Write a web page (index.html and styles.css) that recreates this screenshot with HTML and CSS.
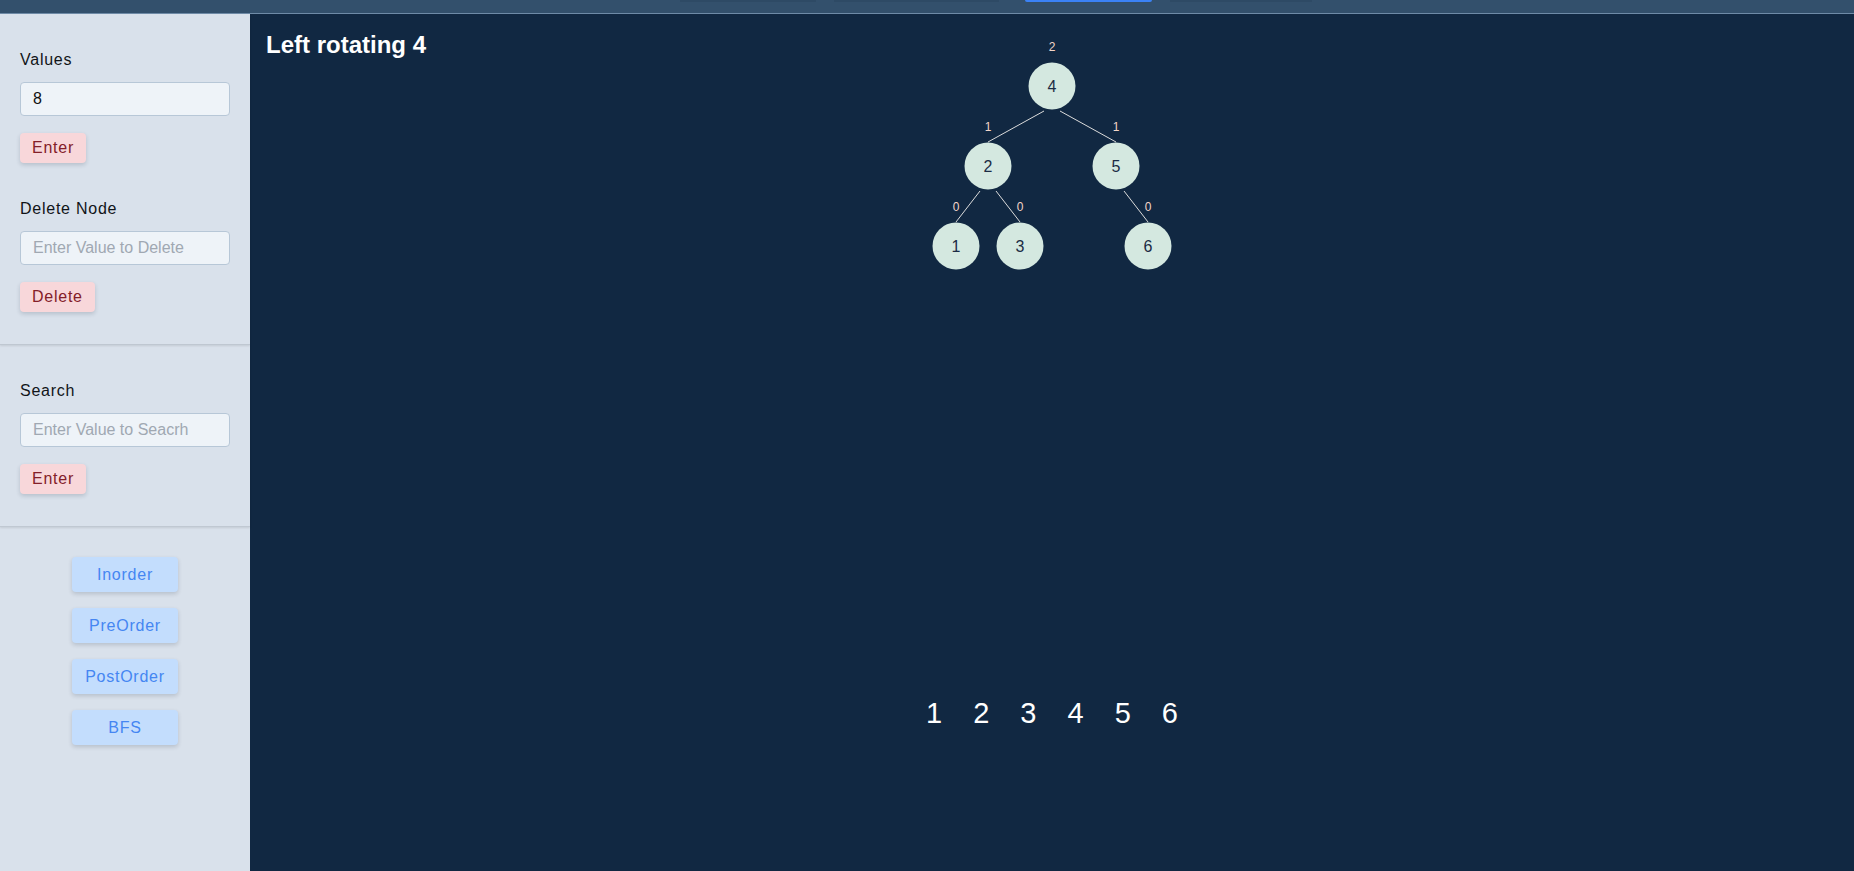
FILE: index.html
```html
<!DOCTYPE html>
<html lang="en">
<head>
<meta charset="utf-8">
<title>AVL Tree Visualizer</title>
<link rel="stylesheet" href="styles.css">
</head>
<body>
<nav class="topbar">
  <div class="tabs">
    <span class="tab tab-a"></span>
    <span class="tab tab-b"></span>
    <span class="tab tab-active"></span>
    <span class="tab tab-d"></span>
  </div>
</nav>
<div class="layout">
  <aside class="sidebar">
    <section class="panel">
      <div class="group">
        <label class="label" for="values">Values</label>
        <input id="values" class="field" type="text" value="8">
        <button class="btn btn-danger">Enter</button>
      </div>
      <div class="group">
        <label class="label" for="del">Delete Node</label>
        <input id="del" class="field" type="text" placeholder="Enter Value to Delete">
        <button class="btn btn-danger">Delete</button>
      </div>
    </section>
    <section class="panel">
      <div class="group">
        <label class="label" for="search">Search</label>
        <input id="search" class="field" type="text" placeholder="Enter Value to Seacrh">
        <button class="btn btn-danger">Enter</button>
      </div>
    </section>
    <section class="panel panel-traversals">
      <button class="btn btn-primary">Inorder</button>
      <button class="btn btn-primary">PreOrder</button>
      <button class="btn btn-primary">PostOrder</button>
      <button class="btn btn-primary">BFS</button>
    </section>
  </aside>
  <main class="main">
    <div class="stage">
      <h2 class="title">Left rotating 4</h2>
      <svg class="tree" width="400" height="260" viewBox="0 0 400 260">
        <g class="edges">
          <line x1="192" y1="97" x2="136" y2="128"/>
          <line x1="208" y1="97" x2="264" y2="128"/>
          <line x1="128" y1="177" x2="104" y2="208"/>
          <line x1="144" y1="177" x2="168" y2="208"/>
          <line x1="272" y1="177" x2="296" y2="208"/>
        </g>
        <g class="heights">
          <text x="200" y="33">2</text>
          <text x="136" y="113">1</text>
          <text x="264" y="113">1</text>
          <text x="104" y="193">0</text>
          <text x="168" y="193">0</text>
          <text x="296" y="193">0</text>
        </g>
        <g class="nodes">
          <circle cx="200" cy="72" r="23.5"/>
          <circle cx="136" cy="152" r="23.5"/>
          <circle cx="264" cy="152" r="23.5"/>
          <circle cx="104" cy="232" r="23.5"/>
          <circle cx="168" cy="232" r="23.5"/>
          <circle cx="296" cy="232" r="23.5"/>
        </g>
        <g class="values">
          <text x="200" y="72">4</text>
          <text x="136" y="152">2</text>
          <text x="264" y="152">5</text>
          <text x="104" y="232">1</text>
          <text x="168" y="232">3</text>
          <text x="296" y="232">6</text>
        </g>
      </svg>
    </div>
    <div class="traversal">
      <span>1</span><span>2</span><span>3</span><span>4</span><span>5</span><span>6</span>
    </div>
  </main>
</div>
</body>
</html>
```

FILE: styles.css
```css
* {
  box-sizing: border-box;
}

html, body {
  margin: 0;
  padding: 0;
  height: 100%;
}

body {
  font-family: "Liberation Sans", Arial, sans-serif;
  background: #112842;
  display: flex;
  flex-direction: column;
  overflow: hidden;
}

.topbar {
  height: 14px;
  flex: 0 0 14px;
  background: #33506c;
  border-bottom: 1px solid #6f8ba7;
}

.tabs {
  display: flex;
  margin-left: 680px;
  gap: 18px;
}

.tab {
  display: block;
  height: 2px;
  background: rgba(20, 35, 55, 0.12);
}

.tab-a { width: 136px; }
.tab-b { width: 165px; margin-right: 8px; }
.tab-active { width: 127px; background: #3b82f6; border-radius: 0 0 2px 2px; }
.tab-d { width: 142px; }

.layout {
  flex: 1;
  display: flex;
  min-height: 0;
}

.sidebar {
  width: 250px;
  flex: 0 0 250px;
  background: #d9e1eb;
  display: flex;
  flex-direction: column;
}

.panel {
  padding: 34px 20px 32px;
  border-bottom: 1px solid #c0c8d2;
  box-shadow: 0 1px 2px rgba(0, 0, 0, 0.1);
  display: flex;
  flex-direction: column;
  gap: 34px;
}

.group {
  display: flex;
  flex-direction: column;
  align-items: flex-start;
}

.label {
  font-size: 16px;
  line-height: 20px;
  letter-spacing: 0.75px;
  color: #111418;
  margin-top: 2px;
  margin-bottom: 12px;
}

.field {
  width: 100%;
  height: 34px;
  padding: 6px 12px;
  font-family: "Liberation Sans", Arial, sans-serif;
  font-size: 16px;
  line-height: 20px;
  color: #111;
  background: #eef3f8;
  border: 1px solid #b7c7d7;
  border-radius: 4px;
  outline: none;
}

.field::placeholder {
  color: #a0a8b2;
}

.btn {
  font-family: "Liberation Sans", Arial, sans-serif;
  font-size: 16px;
  line-height: 20px;
  letter-spacing: 0.75px;
  border: none;
  border-radius: 4px;
  box-shadow: 0 2px 4px rgba(30, 40, 60, 0.18);
  cursor: pointer;
}

.btn-danger {
  margin-top: 17px;
  padding: 5px 12px;
  background: #f8d7da;
  color: #842029;
}

.panel-traversals {
  padding-top: 30px;
  border-bottom: none;
  box-shadow: none;
  align-items: center;
  gap: 16px;
}

.btn-primary {
  width: 106px;
  height: 35px;
  padding: 0;
  background: #c3ddfd;
  color: #4586f2;
}

.main {
  flex: 1;
  min-width: 0;
  display: flex;
  flex-direction: column;
}

.stage {
  display: grid;
}

.title {
  grid-area: 1 / 1;
  justify-self: start;
  align-self: start;
  margin: 17px 0 0 16px;
  font-size: 24px;
  font-weight: 700;
  color: #ffffff;
  position: relative;
  z-index: 1;
}

.tree {
  grid-area: 1 / 1;
  justify-self: center;
  display: block;
}

.edges line {
  stroke: #dcdcdc;
  stroke-width: 1;
}

.nodes circle {
  fill: #d4e8e0;
}

.heights text {
  font-family: "Liberation Sans", Arial, sans-serif;
  font-size: 12px;
  fill: #f3d6c8;
  text-anchor: middle;
  dominant-baseline: central;
}

.values text {
  font-family: "Liberation Sans", Arial, sans-serif;
  font-size: 16px;
  fill: #1b2b44;
  text-anchor: middle;
  dominant-baseline: central;
}

.traversal {
  margin-top: 422px;
  display: flex;
  justify-content: center;
  gap: 31px;
  font-size: 29px;
  line-height: 34px;
  color: #ffffff;
}
```
